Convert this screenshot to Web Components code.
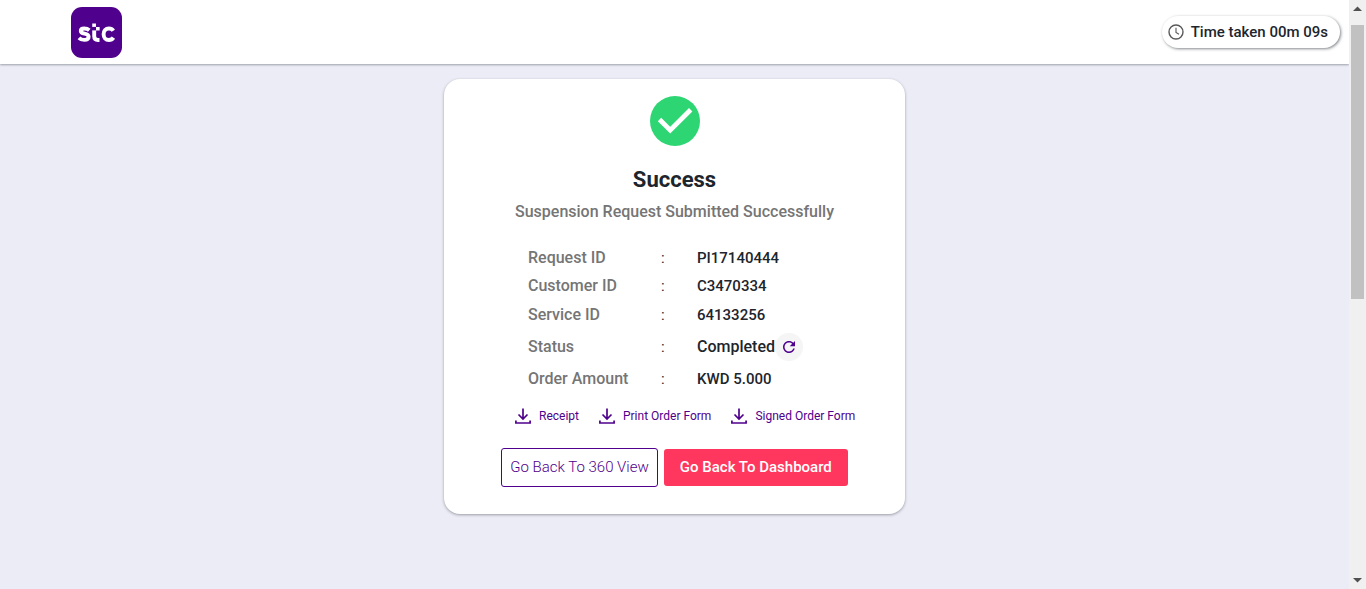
<!DOCTYPE html>
<html lang="en">
<head>
<meta charset="utf-8">
<meta name="viewport" content="width=device-width, initial-scale=1">
<title>Suspension Request</title>
<style>
  body { margin: 0; background: #ececf6; color: #1d252d; font-family: Roboto, "Liberation Sans", sans-serif; }
</style>
</head>
<body>
<order-app></order-app>
<script>
const define = (name, html) => {
  const template = document.createElement('template');
  template.innerHTML = html;
  customElements.define(name, class extends HTMLElement {
    constructor() {
      super();
      this.attachShadow({ mode: 'open' }).append(template.content.cloneNode(true));
    }
  });
};

define('stc-logo', `
  <style>
    :host { display: block; width: 51px; height: 51px; }
    svg { display: block; }
  </style>
  <svg width="51" height="51" viewBox="0 0 51 51" role="img" aria-label="stc">
    <rect width="51" height="51" rx="11" fill="#4f008c"/>
    <g fill="none" stroke="#fff" stroke-width="3.9">
      <path d="M18.3 23.2C16.8 21.9 15 21.5 13.2 21.5C11 21.5 9.8 22.5 9.8 23.9C9.8 27.8 17.6 25.4 17.6 29.7C17.6 31.8 15.8 32.9 13.3 32.9C11.4 32.9 9.5 32.3 8 30.8"/>
      <path d="M23.2 23V29.3C23.2 31.7 24.6 33 27 33H28.5"/>
      <path d="M42.3 23.8C41.3 22.2 39.8 21.5 37.9 21.5C34.6 21.5 32.6 24 32.6 27.2C32.6 30.5 34.6 33 37.9 33C39.8 33 41.4 32.2 42.4 30.6"/>
    </g>
    <path d="M21.250 16.500h3.700v3.400h-3.700zM24.950 19.900h3.700v3.500h-3.700z" fill="#fff"/>
    <path d="M21.200 19.900h3.750v3.500h-3.750z" fill="#4f008c"/>
  </svg>`);

define('time-pill', `
  <style>
    :host { display: flex; align-items: center; box-sizing: border-box; height: 32px; padding: 0 12px 0 6px; border-radius: 16px;
      background: #fff; box-shadow: 1px 1px 3px rgba(29,37,45,.55); font-size: 15px; font-weight: 500; line-height: 20px; white-space: nowrap; }
    svg { width: 16px; height: 16px; margin-right: 7px; flex: none; }
  </style>
  <svg viewBox="0 0 16 16" fill="none" stroke="#595959" stroke-width="1.4" aria-hidden="true"><circle cx="8" cy="8" r="7"/><path d="M8 3.700V8.400L11 10.200" stroke-width="1.1"/></svg>
  <span><slot></slot></span>`);

define('app-header', `
  <style>
    :host { display: block; background: #fff; box-shadow: 0 1px 2px rgba(29,37,45,.38); }
    header { display: flex; align-items: center; justify-content: space-between; height: 64px; padding: 0 9px 0 71px; }
  </style>
  <header><stc-logo></stc-logo><time-pill><slot></slot></time-pill></header>`);

define('success-mark', `
  <style>:host { display: block; } svg { display: block; width: 50px; height: 50px; }</style>
  <svg viewBox="0 0 50 50" aria-hidden="true"><circle cx="25" cy="25" r="25" fill="#2ed573"/><path d="M9.500 23.500L20.200 34.200L40.700 13.700" fill="none" stroke="#fff" stroke-width="4.800"/></svg>`);

define('refresh-button', `
  <style>
    :host { display: block; }
    button { display: grid; place-items: center; width: 28px; height: 28px; padding: 0; border: 0; border-radius: 50%; background: #f5f5f5; color: #4f008c; }
  </style>
  <button type="button" aria-label="Refresh status"><svg width="18" height="18" viewBox="0 0 24 24" fill="currentColor"><path d="M17.65 6.35C16.2 4.9 14.21 4 12 4c-4.42 0-7.99 3.58-7.99 8s3.57 8 7.99 8c3.73 0 6.84-2.55 7.73-6h-2.08c-.82 2.33-3.04 4-5.65 4-3.31 0-6-2.69-6-6s2.69-6 6-6c1.66 0 3.14.69 4.22 1.78L13 11h7V4l-2.35 2.35z"/></svg></button>`);

define('order-details', `
  <style>
    :host { display: block; font-size: 15px; font-weight: 500; line-height: 20px; }
    table { border-collapse: collapse; }
    th, td { height: 28px; padding: 0; text-align: left; font-weight: 500; white-space: nowrap; }
    th { width: 133px; color: #757575; font-size: 16px; }
    .colon { width: 36px; font-weight: 400; }
    .roomy > * { height: 30px; }
    .status > * { height: 34px; }
    .status div { display: flex; align-items: center; font-size: 16px; }
  </style>
  <table>
    <tr><th scope="row">Request ID</th><td class="colon">:</td><td>PI17140444</td></tr>
    <tr><th scope="row">Customer ID</th><td class="colon">:</td><td>C3470334</td></tr>
    <tr class="roomy"><th scope="row">Service ID</th><td class="colon">:</td><td>64133256</td></tr>
    <tr class="status"><th scope="row">Status</th><td class="colon">:</td><td><div>Completed<refresh-button></refresh-button></div></td></tr>
    <tr class="roomy"><th scope="row">Order Amount</th><td class="colon">:</td><td>KWD 5.000</td></tr>
  </table>`);

define('download-link', `
  <style>
    :host { display: block; }
    a { display: flex; align-items: center; gap: 8px; color: #4f008c; font-size: 12px; line-height: 16px; text-decoration: none; white-space: nowrap; }
    svg { width: 16px; height: 16px; flex: none; }
  </style>
  <a href="#"><svg viewBox="0 0 16 16" fill="none" stroke="currentColor" stroke-width="1.7" aria-hidden="true"><path d="M8 0.500V10.500M3.500 6.500L8 11L12.500 6.500M0.900 12.500V15H15.100V12.500"/></svg><slot></slot></a>`);

define('action-button', `
  <style>
    :host { display: block; }
    button { box-sizing: border-box; height: 37px; padding: 0 16px 2px; border: 0; border-radius: 3px; background: #ff375e; color: #fff;
      font: 500 15px/20px Roboto, "Liberation Sans", sans-serif; white-space: nowrap; }
    :host([outline]) button { height: 39px; padding: 0 8px 2px; border: 1px solid #4f008c; background: #fff; color: #4f008c; font-weight: 300; }
  </style>
  <button type="button"><slot></slot></button>`);

define('result-card', `
  <style>
    :host { display: block; box-sizing: border-box; width: 100%; max-width: 461px; padding: 17px 16px 27px; border-radius: 16px;
      background: #fff; box-shadow: 0 1px 3px rgba(29,37,45,.4); }
    .intro { display: flex; flex-direction: column; align-items: center; text-align: center; }
    h1 { margin: 20px 0 0; font-size: 22px; font-weight: 700; line-height: 28px; }
    p { margin: 8px 0 0; color: #757575; font-size: 16px; font-weight: 500; line-height: 20px; }
    order-details { margin: 22px 0 0 68px; }
    nav { display: flex; gap: 20px; margin: 14px 0 0 55px; }
    .actions { display: flex; align-items: center; justify-content: center; gap: 6px; margin-top: 24px; }
  </style>
  <div class="intro">
    <success-mark></success-mark>
    <h1>Success</h1>
    <p>Suspension Request Submitted Successfully</p>
  </div>
  <order-details></order-details>
  <nav aria-label="Documents">
    <download-link>Receipt</download-link>
    <download-link>Print Order Form</download-link>
    <download-link>Signed Order Form</download-link>
  </nav>
  <div class="actions">
    <action-button outline>Go Back To 360 View</action-button>
    <action-button>Go Back To Dashboard</action-button>
  </div>`);

define('scroll-track', `
  <style>
    :host { display: flex; flex-direction: column; align-items: center; justify-content: space-between; background: #f0f0f0; }
    svg { display: block; flex: none; width: 17px; height: 17px; }
    .track { flex: 1; width: 13px; padding: 8px 0 0; }
    .thumb { height: 50%; background: #c1c1c1; }
  </style>
  <svg viewBox="0 0 17 17" aria-hidden="true"><path d="M4 11h9L8.500 6.500z" fill="#505050"/></svg>
  <div class="track"><div class="thumb"></div></div>
  <svg viewBox="0 0 17 17" aria-hidden="true"><path d="M4 6h9L8.500 10.500z" fill="#505050"/></svg>`);

define('order-app', `
  <style>
    :host { display: grid; grid-template-columns: minmax(0, 1fr) 17px; min-height: 100vh; }
    main { display: flex; justify-content: center; padding: 15px 16px; }
  </style>
  <div>
    <app-header>Time taken 00m 09s</app-header>
    <main><result-card></result-card></main>
  </div>
  <scroll-track></scroll-track>`);
</script>
</body>
</html>
